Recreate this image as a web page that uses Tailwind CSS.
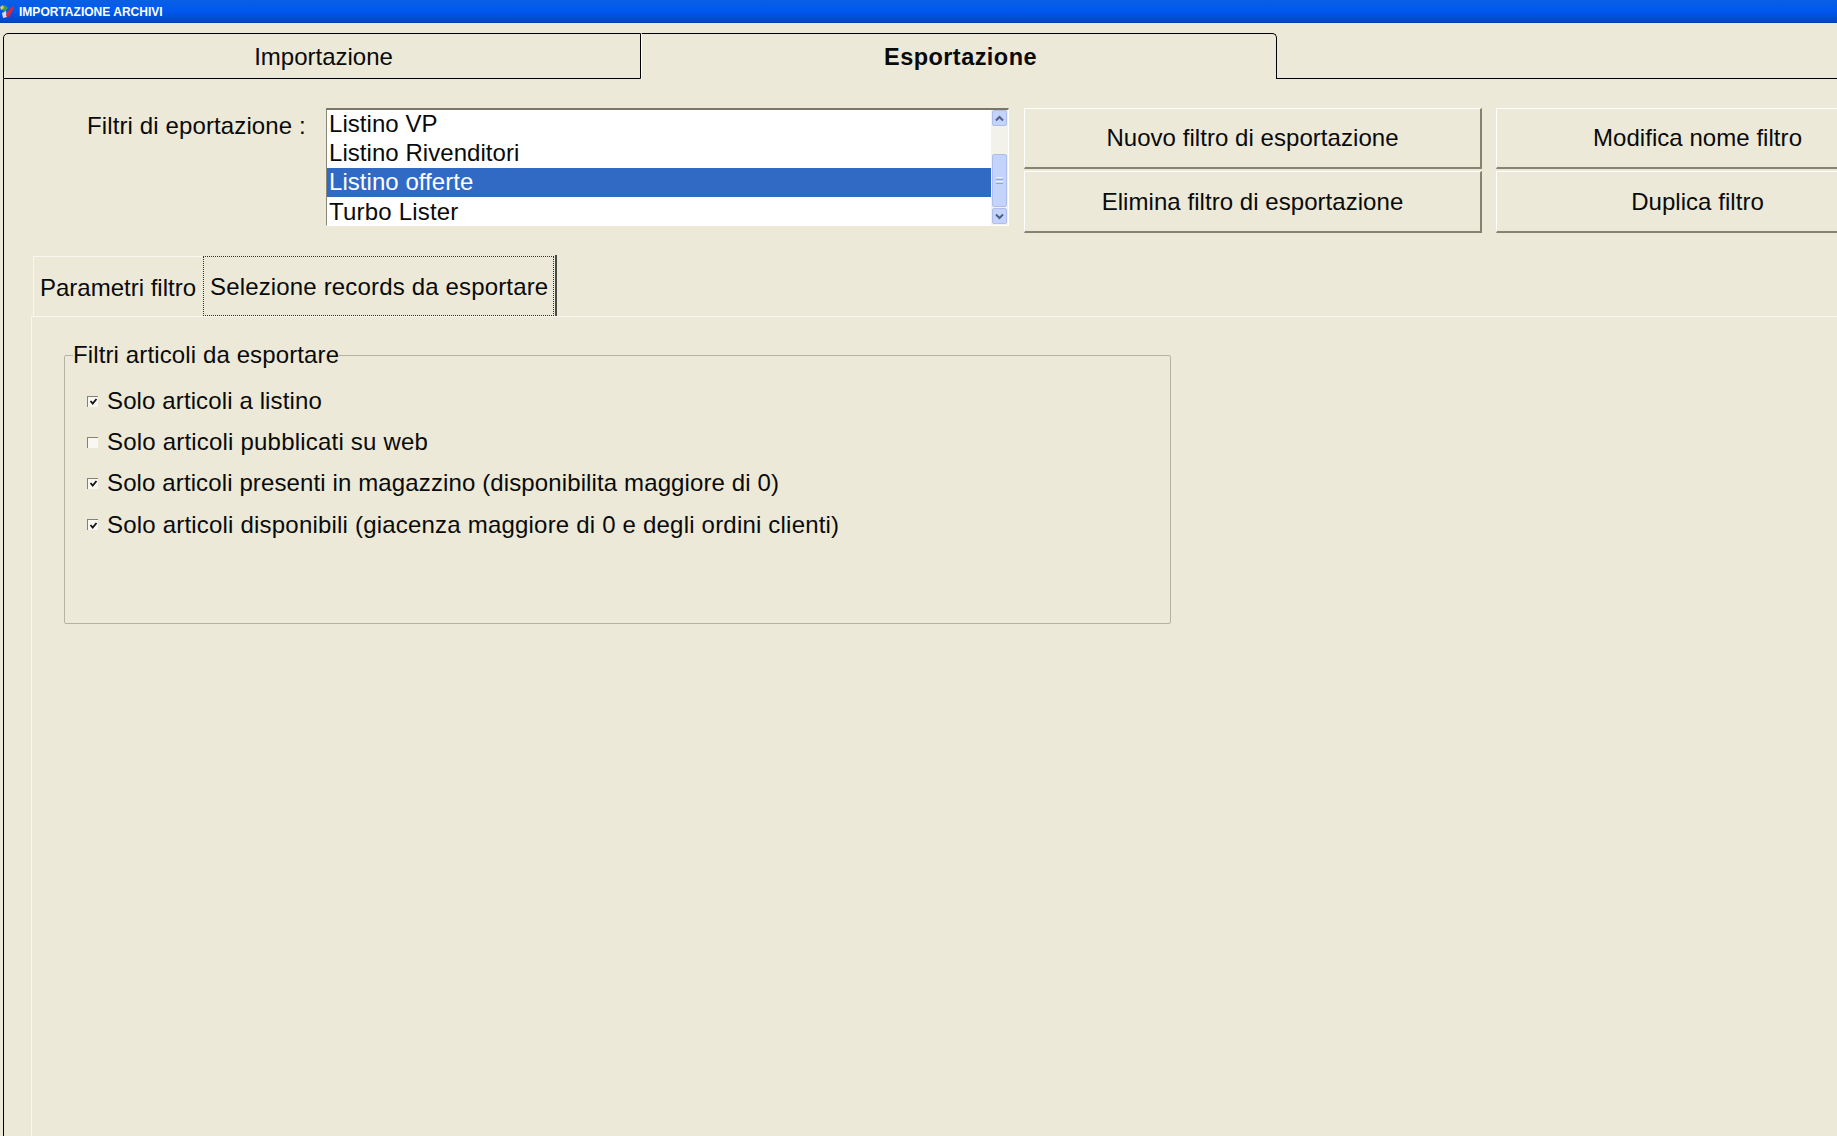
<!DOCTYPE html>
<html lang="it">
<head>
    <meta charset="UTF-8">
    <title>Importazione archivi</title>
    <script src="https://cdn.jsdelivr.net/npm/@tailwindcss/browser@4"></script>
</head>
<body class="bg-[#ece9d8] font-['Liberation_Sans',Arial,sans-serif] text-[#0a0a0a] text-[24px] leading-none">
<div class="w-[1837px] h-[1136px] overflow-hidden flex flex-col">

    <!-- title bar -->
    <div class="h-[23px] shrink-0 flex items-center bg-gradient-to-b from-[#0a5fe6] via-[#0058ee] to-[#0046c8] border-b border-[#0a3fa8]">
        <svg class="w-[15px] h-[15px] shrink-0" viewBox="0 0 15 15">
            <path d="M1 5 L5 1 L8 4 L5 8 Z" fill="#3f9a5a"/>
            <path d="M2 9 L6 7 L7 13 L3 14 Z" fill="#d9dbe6"/>
            <path d="M7 8 L13 2 L14 4 L9 13 L6 12 Z" fill="#d8283a"/>
            <path d="M0 3 L3 1 L4 4 L1 6 Z" fill="#e6c34a"/>
        </svg>
        <span class="ml-[4px] text-white text-[13px] font-bold origin-left scale-x-[0.925] whitespace-nowrap">IMPORTAZIONE ARCHIVI</span>
    </div>

    <div class="flex-1 flex flex-col pt-[10px] pl-[3px]">
        <!-- main tabs -->
        <div class="flex h-[46px] shrink-0">
            <div class="w-[638px] pl-[3px] pt-[1px] flex items-center justify-center border border-black rounded-tl-[5px] bg-[#ece9d8]">Importazione</div>
            <div class="w-[636px] pt-[2px] pl-[3px] flex items-center justify-center border-t border-r border-black rounded-tr-[5px] border-l border-l-white font-bold text-[23.5px] tracking-[0.45px]">Esportazione</div>
            <div class="flex-1 border-b border-black"></div>
        </div>

        <div class="flex-1 flex flex-col border-l border-black">
            <!-- filter row -->
            <div class="flex mt-[29px] shrink-0">
                <div class="w-[301px] shrink-0 pl-[83px] pt-[6px] h-[40px] tracking-[0.12px] whitespace-nowrap">Filtri di eportazione :</div>

                <!-- list -->
                <div class="ml-[21px] w-[683px] shrink-0 h-[118px] flex bg-white border-t-2 border-l border-t-[#7a7768] border-l-[#8a8778] border-b border-r border-b-white border-r-white">
                    <div class="flex-1 -mt-[1px]">
                        <div class="h-[29.3px] pl-[2px] flex items-center tracking-[0.05px]">Listino VP</div>
                        <div class="h-[29.3px] pl-[2px] flex items-center tracking-[0.05px]">Listino Rivenditori</div>
                        <div class="h-[29.3px] pl-[2px] flex items-center tracking-[0.05px] bg-[#316ac5] text-white">Listino offerte</div>
                        <div class="h-[29.3px] pl-[2px] flex items-center tracking-[0.2px]">Turbo Lister</div>
                    </div>
                    <!-- scrollbar -->
                    <div class="w-[17px] flex flex-col bg-[#f3f2ea]">
                        <div class="h-[16px] mx-[1px] rounded-[2px] bg-[#c3d3fb] border border-[#aebdea] flex items-center justify-center">
                            <svg class="w-[9px] h-[7px]" viewBox="0 0 9 7"><path d="M1 5.5 L4.5 2 L8 5.5" fill="none" stroke="#4d6185" stroke-width="2"/></svg>
                        </div>
                        <div class="h-[28px]"></div>
                        <div class="h-[53px] mx-[1px] rounded-[2px] bg-[#c3d3fb] border border-[#aebdea] flex flex-col items-center justify-center gap-[1px]">
                            <div class="w-[7px] h-px bg-[#e9effd]"></div>
                            <div class="w-[7px] h-px bg-[#8fa6dc]"></div>
                            <div class="w-[7px] h-px bg-[#e9effd]"></div>
                            <div class="w-[7px] h-px bg-[#8fa6dc]"></div>
                        </div>
                        <div class="h-[16px] mt-[1px] mx-[1px] rounded-[2px] bg-[#c3d3fb] border border-[#aebdea] flex items-center justify-center">
                            <svg class="w-[9px] h-[7px]" viewBox="0 0 9 7"><path d="M1 1.5 L4.5 5 L8 1.5" fill="none" stroke="#4d6185" stroke-width="2"/></svg>
                        </div>
                    </div>
                </div>

                <!-- buttons -->
                <div class="ml-[15px] w-[458px] shrink-0 flex flex-col gap-[2px]">
                    <div class="h-[61px] flex items-center justify-center border-t border-l border-t-white border-l-white border-b-2 border-r-2 border-b-[#85826f] border-r-[#85826f] tracking-[0.05px]">Nuovo filtro di esportazione</div>
                    <div class="h-[62px] flex items-center justify-center border-t border-l border-t-white border-l-white border-b-2 border-r-2 border-b-[#85826f] border-r-[#85826f] tracking-[0.05px]">Elimina filtro di esportazione</div>
                </div>
                <div class="ml-[14px] w-[402px] shrink-0 flex flex-col gap-[2px]">
                    <div class="h-[61px] flex items-center justify-center border-t border-l border-t-white border-l-white border-b-2 border-b-[#85826f] tracking-[0.05px]">Modifica nome filtro</div>
                    <div class="h-[62px] flex items-center justify-center border-t border-l border-t-white border-l-white border-b-2 border-b-[#85826f] tracking-[0.05px]">Duplica filtro</div>
                </div>
            </div>

            <!-- inner tabs -->
            <div class="flex h-[61px] mt-[22px] ml-[29px] shrink-0 items-end">
                <div class="w-[170px] h-[60px] pl-[6px] pt-[2px] flex items-center border-t border-l border-[#f8f7f0] whitespace-nowrap">Parametri filtro</div>
                <div class="w-[354px] h-[61px] flex items-center border-r-2 border-r-[#4a4a44]">
                    <div class="w-[351px] h-[60px] pt-[2px] flex items-center pl-[6px] border border-dotted border-[#33332e] tracking-[0.16px] whitespace-nowrap">Selezione records da esportare</div>
                </div>
            </div>

            <!-- tab panel -->
            <div class="flex-1 ml-[27px] border-t border-l border-[#f8f7f0] pt-[26px] pl-[32px]">
                <fieldset class="w-[1107px] h-[281px] border border-[#b5b3a3] rounded-[2px] px-[8px] pt-[22px]">
                    <legend class="px-0 ml-0 tracking-[0.12px] leading-[24px]">Filtri articoli da esportare</legend>
                    <div class="flex flex-col gap-[17.2px] pl-[14px]">
                        <label class="flex items-center h-[24px] whitespace-nowrap tracking-[0.12px]">
                            <span class="w-[11px] h-[11px] mr-[9px] bg-[#f8f7f1] border-t border-l border-[#85826f] flex items-center justify-center"><svg class="w-[9px] h-[9px]" viewBox="0 0 9 9"><path d="M1.5 4 L3.7 6.5 L7.5 2" fill="none" stroke="#111" stroke-width="1.8"/></svg></span>
                            Solo articoli a listino
                        </label>
                        <label class="flex items-center h-[24px] whitespace-nowrap tracking-[0.2px]">
                            <span class="w-[11px] h-[11px] mr-[9px] bg-[#f8f7f1] border-t border-l border-[#85826f]"></span>
                            Solo articoli pubblicati su web
                        </label>
                        <label class="flex items-center h-[24px] whitespace-nowrap tracking-[0.12px]">
                            <span class="w-[11px] h-[11px] mr-[9px] bg-[#f8f7f1] border-t border-l border-[#85826f] flex items-center justify-center"><svg class="w-[9px] h-[9px]" viewBox="0 0 9 9"><path d="M1.5 4 L3.7 6.5 L7.5 2" fill="none" stroke="#111" stroke-width="1.8"/></svg></span>
                            Solo articoli presenti in magazzino (disponibilita maggiore di 0)
                        </label>
                        <label class="flex items-center h-[24px] whitespace-nowrap tracking-[0.2px]">
                            <span class="w-[11px] h-[11px] mr-[9px] bg-[#f8f7f1] border-t border-l border-[#85826f] flex items-center justify-center"><svg class="w-[9px] h-[9px]" viewBox="0 0 9 9"><path d="M1.5 4 L3.7 6.5 L7.5 2" fill="none" stroke="#111" stroke-width="1.8"/></svg></span>
                            Solo articoli disponibili (giacenza maggiore di 0 e degli ordini clienti)
                        </label>
                    </div>
                </fieldset>
            </div>
        </div>
    </div>
</div>
</body>
</html>
